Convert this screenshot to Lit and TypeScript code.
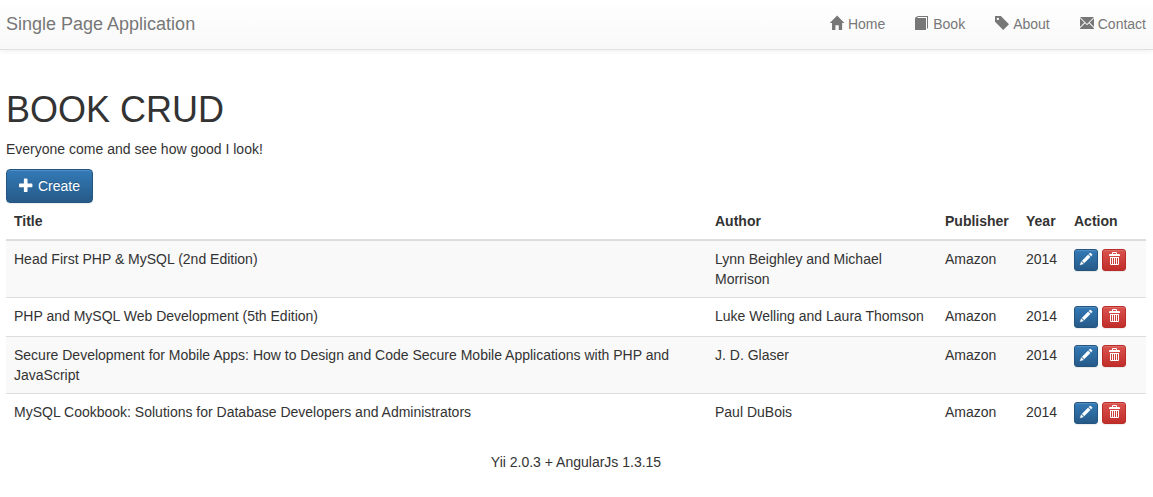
import { LitElement, html, css, svg } from "lit";
import { customElement, property } from "lit/decorators.js";

// Icon outlines, drawn in a 14 x 14 box or with their own scale.
const icons = {
  home: svg`<path transform="translate(-0.2 14) scale(0.0112 -0.0117)" d="M18 618l620 608q8 7 18.5 7t17.5 -7l608 -608q8 -8 5.5 -13t-12.5 -5h-175v-575q0 -10 -7.5 -17.5t-17.5 -7.5h-250q-10 0 -17.5 7.5t-7.5 17.5v375h-300v-375q0 -10 -7.5 -17.5t-17.5 -7.5h-250q-10 0 -17.5 7.5t-7.5 17.5v575h-175q-10 0 -12.5 5t5.5 13z"/>`,
  book: svg`<path d="M3 0H13V12L12 13V1H3L2 2H11V14H0V2.5Q0 1.500 1 1Z"/>`,
  tag: svg`<path fill-rule="evenodd" transform="translate(0 14) scale(0.01167 -0.01167)" d="M1 700v475q0 10 7.5 17.5t17.5 7.5h474l700 -700l-500 -500zM148 953q0 -42 29 -71q30 -30 71.5 -30t71.500 30q29 29 29 71t-29 71q-30 30 -71.5 30t-71.5 -30q-29 -29 -29 -71z"/>`,
  mail: svg`<path d="M0 1H14L7 8ZM0 2.300L4.300 6.600L0 10.900ZM14 2.300V10.900L9.700 6.600ZM0 13V12.300L5 7.300L7 9.300L9 7.300L14 12.300V13Z"/>`,
  plus: svg`<path transform="translate(0 14) scale(0.01217 -0.01217)" d="M450 1100h200q21 0 35.500 -14.500t14.500 -35.500v-350h350q21 0 35.500 -14.500t14.500 -35.500v-200q0 -21 -14.500 -35.500t-35.500 -14.500h-350v-350q0 -21 -14.500 -35.500t-35.500 -14.500h-200q-21 0 -35.500 14.500t-14.500 35.500v350h-350q-21 0 -35.500 14.500t-14.500 35.500v200q0 21 14.500 35.500t35.500 14.500h350v350q0 21 14.500 35.500t35.500 14.500z"/>`,
  pencil: svg`<path stroke="currentColor" stroke-width="45" transform="translate(0.400 13.700) scale(0.0114 -0.0114)" d="M1011 1210q19 0 33 -13l153 -153q13 -14 13 -33t-13 -33l-99 -92l-214 214l95 96q13 14 32 14zM1013 800l-615 -614l-214 214l614 614zM317 96l-333 -112l110 335z"/>`,
  trash: svg`<path fill-rule="evenodd" transform="scale(1.16667)" d="M5 -1H8Q9 -1 9 0V1H11Q12 1 12 2V3H1V2Q1 1 2 1H4V0Q4 -1 5 -1ZM5 0V1H8V0ZM2 4H11V11Q11 12 10 12H3Q2 12 2 11ZM3 5V11H4V5ZM5 5V11H6V5ZM7 5V11H8V5ZM9 5V11H10V5Z"/>`,
};

type IconName = keyof typeof icons;

@customElement("glyph-icon")
class GlyphIcon extends LitElement {
  @property() name: IconName = "home";

  static styles = css`
    :host {
      display: block;
      flex: none;
      width: 14px;
      height: 14px;
    }
    .glyph {
      display: block;
      width: 100%;
      height: 100%;
      fill: currentColor;
      overflow: visible;
    }
  `;

  render() {
    return html`<svg class="glyph" viewBox="0 0 14 14" aria-hidden="true">${icons[this.name]}</svg>`;
  }
}

const links: { icon: IconName; label: string }[] = [
  { icon: "home", label: "Home" },
  { icon: "book", label: "Book" },
  { icon: "tag", label: "About" },
  { icon: "mail", label: "Contact" },
];

const books = [
  { title: "Head First PHP & MySQL (2nd Edition)", author: "Lynn Beighley and Michael Morrison", publisher: "Amazon", year: 2014 },
  { title: "PHP and MySQL Web Development (5th Edition)", author: "Luke Welling and Laura Thomson", publisher: "Amazon", year: 2014 },
  { title: "Secure Development for Mobile Apps: How to Design and Code Secure Mobile Applications with PHP and JavaScript", author: "J. D. Glaser", publisher: "Amazon", year: 2014 },
  { title: "MySQL Cookbook: Solutions for Database Developers and Administrators", author: "Paul DuBois", publisher: "Amazon", year: 2014 },
];

@customElement("app-root")
class AppRoot extends LitElement {
  static styles = css`
    :host {
      display: block;
      background: #fff;
      color: #333;
      font: 14px/20px "Liberation Sans", Arial, sans-serif;
    }
    * {
      box-sizing: border-box;
    }
    .navbar {
      display: flex;
      justify-content: space-between;
      align-items: center;
      height: 50px;
      padding: 0 7px 2px 6px;
      border-bottom: 1px solid #e0e0e0;
      background: linear-gradient(#fff, #f8f8f8);
      box-shadow: 0 1px 5px rgba(0, 0, 0, 0.075);
    }
    .brand {
      font-size: 18px;
      color: #777;
      text-decoration: none;
    }
    .menu {
      display: flex;
      gap: 30px;
      margin: 0;
      padding: 0;
      list-style: none;
    }
    .link {
      display: flex;
      align-items: center;
      gap: 4px;
      color: #777;
      text-decoration: none;
    }
    .link glyph-icon {
      margin-bottom: 2px;
    }
    .content {
      padding: 40px 7px 0 6px;
    }
    .heading {
      margin: 0 0 9px;
      font-size: 36px;
      line-height: 40px;
      font-weight: 400;
    }
    .lead {
      margin: 0 0 10px;
    }
    .btn {
      display: inline-flex;
      align-items: center;
      justify-content: center;
      border: 1px solid #245580;
      border-radius: 4px;
      color: #fff;
      background: linear-gradient(#337ab7, #265a88);
      box-shadow: inset 0 1px 0 rgba(255, 255, 255, 0.15), 0 1px 1px rgba(0, 0, 0, 0.075);
      font: inherit;
      text-shadow: 0 -1px 0 rgba(0, 0, 0, 0.2);
      cursor: pointer;
    }
    .create {
      gap: 5px;
      height: 34px;
      padding: 0 12px;
    }
    .create glyph-icon {
      margin-bottom: 2px;
    }
    .small {
      width: 24px;
      height: 22px;
      padding: 0 0 2px;
      border-radius: 3px;
    }
    .small glyph-icon {
      width: 12px;
      height: 12px;
    }
    .danger {
      border-color: #b92c28;
      background: linear-gradient(#d9534f, #c12e2a);
    }
    .books {
      width: 100%;
      table-layout: fixed;
      border-collapse: collapse;
      margin-bottom: 20px;
    }
    .books th,
    .books td {
      padding: 8px;
      text-align: left;
      vertical-align: top;
    }
    .books th {
      border-bottom: 2px solid #ddd;
    }
    .books td {
      border-top: 1px solid #ddd;
    }
    .books tbody tr:nth-child(odd) {
      background: #f9f9f9;
    }
    .author {
      width: 230px;
    }
    .publisher {
      width: 81px;
    }
    .year {
      width: 48px;
    }
    .action {
      width: 80px;
    }
    .actions {
      display: flex;
      gap: 4px;
    }
    .footer {
      padding: 0 7px 20px 6px;
      text-align: center;
    }
  `;

  render() {
    return html`
      <nav class="navbar">
        <a class="brand" href="#">Single Page Application</a>
        <ul class="menu">
          ${links.map((l) => html`<li><a class="link" href="#"><glyph-icon .name=${l.icon}></glyph-icon>${l.label}</a></li>`)}
        </ul>
      </nav>
      <main class="content">
        <h1 class="heading">BOOK CRUD</h1>
        <p class="lead">Everyone come and see how good I look!</p>
        <button class="btn create" type="button"><glyph-icon .name=${"plus"}></glyph-icon>Create</button>
        <table class="books">
          <thead>
            <tr>
              <th>Title</th>
              <th class="author">Author</th>
              <th class="publisher">Publisher</th>
              <th class="year">Year</th>
              <th class="action">Action</th>
            </tr>
          </thead>
          <tbody>
            ${books.map(
              (b) => html`<tr>
                <td>${b.title}</td>
                <td>${b.author}</td>
                <td>${b.publisher}</td>
                <td>${b.year}</td>
                <td>
                  <div class="actions">
                    <button class="btn small" type="button" aria-label="Edit"><glyph-icon .name=${"pencil"}></glyph-icon></button>
                    <button class="btn small danger" type="button" aria-label="Delete"><glyph-icon .name=${"trash"}></glyph-icon></button>
                  </div>
                </td>
              </tr>`
            )}
          </tbody>
        </table>
      </main>
      <footer class="footer">Yii 2.0.3 + AngularJs 1.3.15</footer>
    `;
  }
}
